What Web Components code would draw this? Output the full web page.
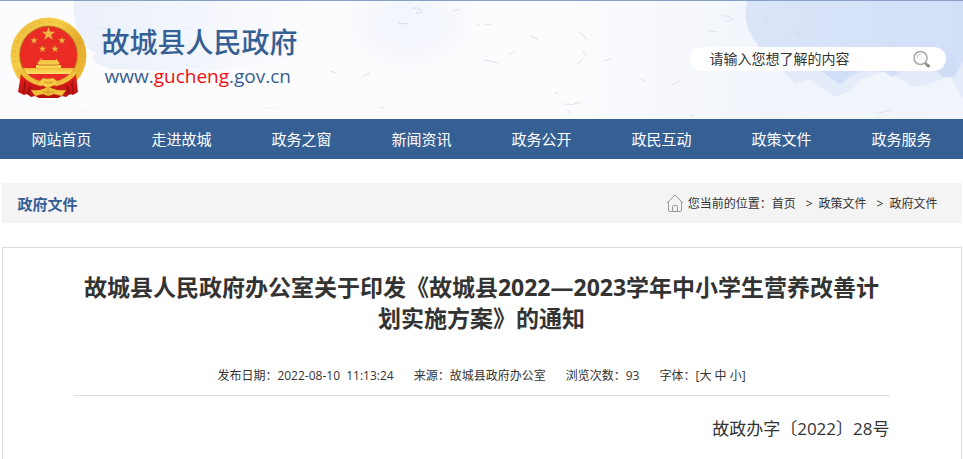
<!DOCTYPE html>
<html lang="zh-CN">
<head>
<meta charset="UTF-8">
<meta name="viewport" content="width=device-width, initial-scale=1.0">
<title>故城县人民政府</title>
<style>
  body {
    display: flex;
    flex-direction: column;
    min-height: 100vh;
    margin: 0;
    background: #fff;
    color: #333;
    font-family: "Open Sans", "Noto Sans CJK SC", sans-serif;
    font-size: 12px;
  }
</style>
</head>
<body>

<site-header></site-header>
<site-nav></site-nav>
<position-bar heading="政府文件">
  <a href="#">首页</a>
  <a href="#">政策文件</a>
  <a href="#">政府文件</a>
</position-bar>
<article-view>
  <span slot="title">故城县人民政府办公室关于印发《故城县2022—2023学年中小学生营养改善计划实施方案》的通知</span>
  <span slot="meta">发布日期：2022-08-10&nbsp; 11:13:24</span>
  <span slot="meta">来源：故城县政府办公室</span>
  <span slot="meta">浏览次数：93</span>
  <span slot="number">故政办字〔2022〕28号</span>
</article-view>

<script>
class NationalEmblem extends HTMLElement {
  constructor() {
    super()
    this.attachShadow({ mode: "open" })
    this.render()
  }

  render() {
    const star = (x, y, r) => {
      const points = []
      for (let i = 0; i < 10; i++) {
        const radius = i % 2 ? r * 0.4 : r
        const angle = (Math.PI / 5) * i - Math.PI / 2
        points.push(`${(x + radius * Math.cos(angle)).toFixed(2)},${(y + radius * Math.sin(angle)).toFixed(2)}`)
      }
      return `<polygon points="${points.join(" ")}"/>`
    }

    this.shadowRoot.innerHTML = `
    <style>
      :host {
        display: block;
        width: 78px;
        flex: none;
      }

      svg {
        display: block;
        width: 100%;
      }
    </style>

    <svg viewBox="0 0 78 82" role="img" aria-label="国徽">
      <defs>
        <linearGradient id="gold" x1="0" y1="0" x2="1" y2="1">
          <stop offset="0" stop-color="#e9b83c"/>
          <stop offset="0.35" stop-color="#f6cf4a"/>
          <stop offset="0.6" stop-color="#e5ab2c"/>
          <stop offset="1" stop-color="#f2c43c"/>
        </linearGradient>
        <linearGradient id="light" x1="0" y1="0" x2="0" y2="1">
          <stop offset="0" stop-color="#f5bd35"/>
          <stop offset="1" stop-color="#fbe46c"/>
        </linearGradient>
        <linearGradient id="cloth" x1="0" y1="0" x2="0" y2="1">
          <stop offset="0" stop-color="#e8231c"/>
          <stop offset="1" stop-color="#b60f12"/>
        </linearGradient>
      </defs>
      <circle cx="38.500" cy="38.500" r="38" fill="url(#gold)"/>
      <circle cx="38.500" cy="38.500" r="34" fill="none" stroke="#d9a02e" stroke-width="3" stroke-dasharray="2 3 1 4" opacity="0.35"/>
      <circle cx="38.500" cy="38" r="29.500" fill="#b98427"/>
      <circle cx="38.500" cy="38" r="28.500" fill="#ea2c25"/>
      <g fill="#f0b845" stroke="#c8741f" stroke-width="0.300">
        ${star(38.5, 17, 7)}
        ${star(24, 23.5, 3.8)}
        ${star(52, 23.5, 3.8)}
        ${star(32.5, 32, 3.8)}
        ${star(45, 32, 3.8)}
      </g>
      <path fill="url(#light)" d="M29 43h19v2h2l-2 3H29l-2-3h2zM26 48h25v7H26zM30 42l2-1v2zM45 41l2 1v1z"/>
      <path fill="#c98220" d="M29 47.600h19v.8H29zM27 51h23v.6H27z"/>
      <path fill="url(#light)" d="M13 51h51l-3 6H16z"/>
      <path fill="url(#cloth)" d="M11 57L16 62 24 66 34 68 43 68 53 66 61 62 66 57 68 75 63 78 60 77 56 80 52 79 48 81H29L25 79 21 80 17 77 14 78 8 75z"/>
      <path fill="#9f0f11" d="M14 63l2 4-2 10-1-1 1-9zM20 67l1 4-3 7-1-1 2-7zM63 63l-2 4 2 10 1-1-1-9zM57 67l-1 4 3 7 1-1-2-7z"/>
      <path fill="none" stroke="#f0bf3c" stroke-width="5" d="M12 54Q18 64 32 67M65 54Q59 64 45 67"/>
      <path fill="none" stroke="#c88f26" stroke-width="0.500" d="M14 54Q20 62 32 65M63 54Q57 62 45 65"/>
      <path fill="#f6cb43" stroke="#c48a22" stroke-width="0.500" d="M30 64l3-3 5 1 5-1 4 3 2 2-3 2-4 1-4 3-4-3-5-1-2-2z"/>
      <path fill="#f1c03a" stroke="#c38122" stroke-width="0.300" d="M21 73Q29 74 33 72L38 70 44 72Q48 74 56 73L52 79 44 77 38 79 33 77 25 79z"/>
      <path fill="none" stroke="#c17f20" stroke-width="0.700" d="M34 65l4 1 5-1M33 75h11M38 71v7"/>
    </svg>
  `
  }
}

class SearchBox extends HTMLElement {
  constructor() {
    super()
    this.attachShadow({ mode: "open" })
    this.render()
  }

  render() {
    this.shadowRoot.innerHTML = `
    <style>
      :host {
        display: block;
        width: 256px;
      }

      form {
        display: flex;
        align-items: center;
        height: 24px;
        margin: 0;
        padding: 0 14px 0 20px;
        box-sizing: border-box;
        border-radius: 12px;
        background: #fff;
      }

      input {
        flex: 1;
        min-width: 0;
        height: 22px;
        padding: 0 0 2px;
        border: 0;
        outline: 0;
        background: none;
        color: #333;
        font: inherit;
        font-size: 14px;
      }

      button {
        width: 20px;
        height: 20px;
        padding: 0;
        border: 0;
        background: none;
        cursor: pointer;
      }

      svg {
        display: block;
      }
    </style>

    <form>
      <input type="text" value="请输入您想了解的内容" aria-label="站内搜索">
      <button type="button" aria-label="搜索">
        <svg viewBox="0 0 20 20" width="20" height="20">
          <circle cx="8.500" cy="9" r="6.500" fill="#fafafa" stroke="#a8a8a8" stroke-width="1.500"/>
          <path d="M5 9a4 4 0 0 1 4-4" fill="none" stroke="#c8c8c8"/>
          <path d="M13 14l1.500 1" stroke="#a0a0a0" stroke-width="2"/>
          <path d="M14.500 15.500l2 1.500" stroke="#8c8c8c" stroke-width="3" stroke-linecap="round"/>
        </svg>
      </button>
    </form>
  `
  }
}

class SiteHeader extends HTMLElement {
  constructor() {
    super()
    this.attachShadow({ mode: "open" })
    this.render()
  }

  render() {
    // paper fibres of the header background
    const fibres = [
      "M112 7q6-1 9 2t-5 3", "M153 10l7-2", "M98 22l10 1", "M177 24h3M185 23l6 1", "M209 54l6-4", "M184 59l15 3",
      "M279 31l6 5 2 4", "M283 50l4 6", "M304 60l7-2", "M264 103q8 2 17-2", "M62 76l8-4", "M277 63l5-4",
      "M30 70l6 2", "M80 106l4 1", "M267 108l4 5", "M255 92h4", "M230 34l8 5"
    ]

    this.shadowRoot.innerHTML = `
    <style>
      :host {
        display: block;
        position: relative;
        border-top: 1px solid #88a0c6;
        background: #fcfcfe;
      }

      .backdrop {
        position: absolute;
        inset: 0;
        width: 100%;
        height: 100%;
      }

      .inner {
        position: relative;
        display: flex;
        align-items: center;
        justify-content: space-between;
        max-width: 960px;
        height: 118px;
        margin: 0 auto;
        padding: 0 16px 2px 8px;
        box-sizing: border-box;
      }

      .brand {
        display: flex;
        align-items: center;
        gap: 14px;
        padding-bottom: 2px;
        color: #365f94;
        text-decoration: none;
      }

      .name {
        display: block;
        font-size: 28px;
        line-height: 36px;
        font-weight: 500;
      }

      .url {
        display: block;
        padding-left: 3px;
        font-size: 19px;
        line-height: 32px;
      }

      .url b {
        color: #f40d10;
        font-weight: inherit;
      }
    </style>

    <svg class="backdrop" viewBox="0 0 963 118" preserveAspectRatio="xMidYMid slice" aria-hidden="true">
      <defs>
        <linearGradient id="right" x1="0" x2="1">
          <stop offset="0" stop-color="#f0f4fb" stop-opacity="0"/>
          <stop offset="0.5" stop-color="#f1f5fb"/>
          <stop offset="1" stop-color="#f0f4fc"/>
        </linearGradient>
        <linearGradient id="wash" x1="0" x2="1">
          <stop offset="0" stop-color="#dbe5f8"/>
          <stop offset="0.5" stop-color="#d6e2f8"/>
          <stop offset="1" stop-color="#d3dff7"/>
        </linearGradient>
        <linearGradient id="fade" x1="0" x2="1">
          <stop offset="0" stop-color="#ebf0fa"/>
          <stop offset="0.5" stop-color="#f3f6fc"/>
          <stop offset="1" stop-color="#fcfcfe" stop-opacity="0"/>
        </linearGradient>
        <radialGradient id="cloud">
          <stop offset="0.4" stop-color="#f3f6fc"/>
          <stop offset="1" stop-color="#f3f6fc" stop-opacity="0"/>
        </radialGradient>
      </defs>
      <path fill="url(#fade)" d="M74 0H340L290 60 190 72 130 68H112L100 64 92 58 96 52 85 46 82 36 76 26 74 13z"/>
      <ellipse cx="410" cy="22" rx="70" ry="50" fill="url(#cloud)"/>
      <path fill="url(#right)" d="M570 0H963V118H570z"/>
      <path fill="#e4ecfa" d="M760 50L796 83 810 78 835 96 850 90 862 78 885 70 905 80 912 86 925 84 950 76 963 98V0H770z"/>
      <path fill="url(#wash)" d="M747 0H963V60L955 76 943 76 932 68 902 66 892 76 884 71 865 70 850 75 840 83 824 72 810 62 765 54 755 40 748 28 745 15z"/>
      <path fill="#cbdaf5" opacity="0.5" d="M822 70L840 83 857 70zM888 68l7 8 10-8zM935 69l13 8 8-7V55z"/>
      <g fill="none" stroke="#a9b7c8">
        <path transform="translate(300 0)" opacity="0.4" d="${fibres.join("")}"/>
        <path transform="translate(610 8)" opacity="0.25" d="${fibres.slice(0, 15).join("")}"/>
        <path transform="translate(0 4)" opacity="0.15" d="${fibres.slice(2, 14).join("")}"/>
      </g>
    </svg>
    <div class="inner">
      <a class="brand" href="#">
        <national-emblem></national-emblem>
        <span>
          <span class="name">故城县人民政府</span>
          <span class="url">www.<b>gucheng</b>.gov.cn</span>
        </span>
      </a>
      <search-box></search-box>
    </div>
  `
  }
}

class SiteNav extends HTMLElement {
  constructor() {
    super()
    this.attachShadow({ mode: "open" })
    this.items = ["网站首页", "走进故城", "政务之窗", "新闻资讯", "政务公开", "政民互动", "政策文件", "政务服务"]
    this.render()
  }

  render() {
    this.shadowRoot.innerHTML = `
    <style>
      :host {
        display: block;
        background: #365f94;
      }

      nav {
        display: grid;
        grid-template-columns: repeat(8, 1fr);
        max-width: 960px;
        margin: 0 auto;
      }

      a {
        color: #fff;
        font-size: 15px;
        line-height: 40px;
        text-align: center;
        text-decoration: none;
        white-space: nowrap;
      }

      a:hover {
        background: #2a4f80;
      }
    </style>

    <nav>
      ${this.items.map((item) => `<a href="#">${item}</a>`).join("")}
    </nav>
  `
  }
}

class PositionBar extends HTMLElement {
  constructor() {
    super()
    this.attachShadow({ mode: "open" })
    this.render()
  }

  render() {
    this.shadowRoot.innerHTML = `
    <style>
      :host {
        display: flex;
        align-items: center;
        justify-content: space-between;
        width: 100%;
        max-width: 960px;
        height: 40px;
        margin: 24px auto;
        padding: 0 24px 0 16px;
        box-sizing: border-box;
        background: #f4f4f4;
      }

      h2 {
        margin: 0;
        color: #365f94;
        font-size: 15px;
        font-weight: 700;
      }

      .path {
        display: flex;
        align-items: center;
      }

      svg {
        margin-right: 4px;
      }

      ::slotted(a) {
        color: #333;
        text-decoration: none;
      }

      ::slotted(a:not(:first-child))::before {
        content: ">";
        margin: 0 6px 0 10px;
      }
    </style>

    <h2>${this.getAttribute("heading")}</h2>
    <div class="path">
      <svg viewBox="0 0 18 20" width="18" height="20" fill="none" stroke="#999" aria-hidden="true">
        <path d="M1 10L9 2l8 8M2.500 9V17q0 1.500 1.500 1.500h10q1.500 0 1.500-1.500V9M6.500 18.500v-5q0-1 1-1h3q1 0 1 1v5"/>
      </svg>
      <span>您当前的位置：</span>
      <slot></slot>
    </div>
  `
  }
}

class ArticleView extends HTMLElement {
  constructor() {
    super()
    this.attachShadow({ mode: "open" })
    this.render()
    this.setupEventListeners()
  }

  render() {
    this.shadowRoot.innerHTML = `
    <style>
      :host {
        display: block;
        flex: 1;
        width: 100%;
        max-width: 960px;
        margin: 0 auto;
        padding: 24px 71px 0;
        box-sizing: border-box;
        border: 1px solid #ddd;
        border-bottom: 0;
      }

      h1 {
        margin: 0;
        font-size: 23px;
        line-height: 31px;
        text-align: center;
      }

      .meta {
        display: flex;
        flex-wrap: wrap;
        justify-content: center;
        gap: 0 20px;
        margin-top: 32px;
        padding-bottom: 9px;
        border-bottom: 1px solid #ddd;
        line-height: 20px;
      }

      button {
        padding: 0;
        border: 0;
        background: none;
        color: inherit;
        font: inherit;
        cursor: pointer;
      }

      .content {
        margin-top: 17px;
        font-size: 17px;
        line-height: 32px;
        text-align: right;
      }
    </style>

    <h1><slot name="title"></slot></h1>
    <div class="meta">
      <slot name="meta"></slot>
      <span>字体：[<button data-size="20px">大</button> <button data-size="17px">中</button> <button data-size="14px">小</button>]</span>
    </div>
    <div class="content"><slot name="number"></slot></div>
  `
  }

  setupEventListeners() {
    const content = this.shadowRoot.querySelector(".content")
    this.shadowRoot.querySelectorAll("button").forEach((button) => {
      button.addEventListener("click", () => {
        content.style.fontSize = button.dataset.size
      })
    })
  }
}

customElements.define("national-emblem", NationalEmblem)
customElements.define("search-box", SearchBox)
customElements.define("site-header", SiteHeader)
customElements.define("site-nav", SiteNav)
customElements.define("position-bar", PositionBar)
customElements.define("article-view", ArticleView)
</script>
</body>
</html>
